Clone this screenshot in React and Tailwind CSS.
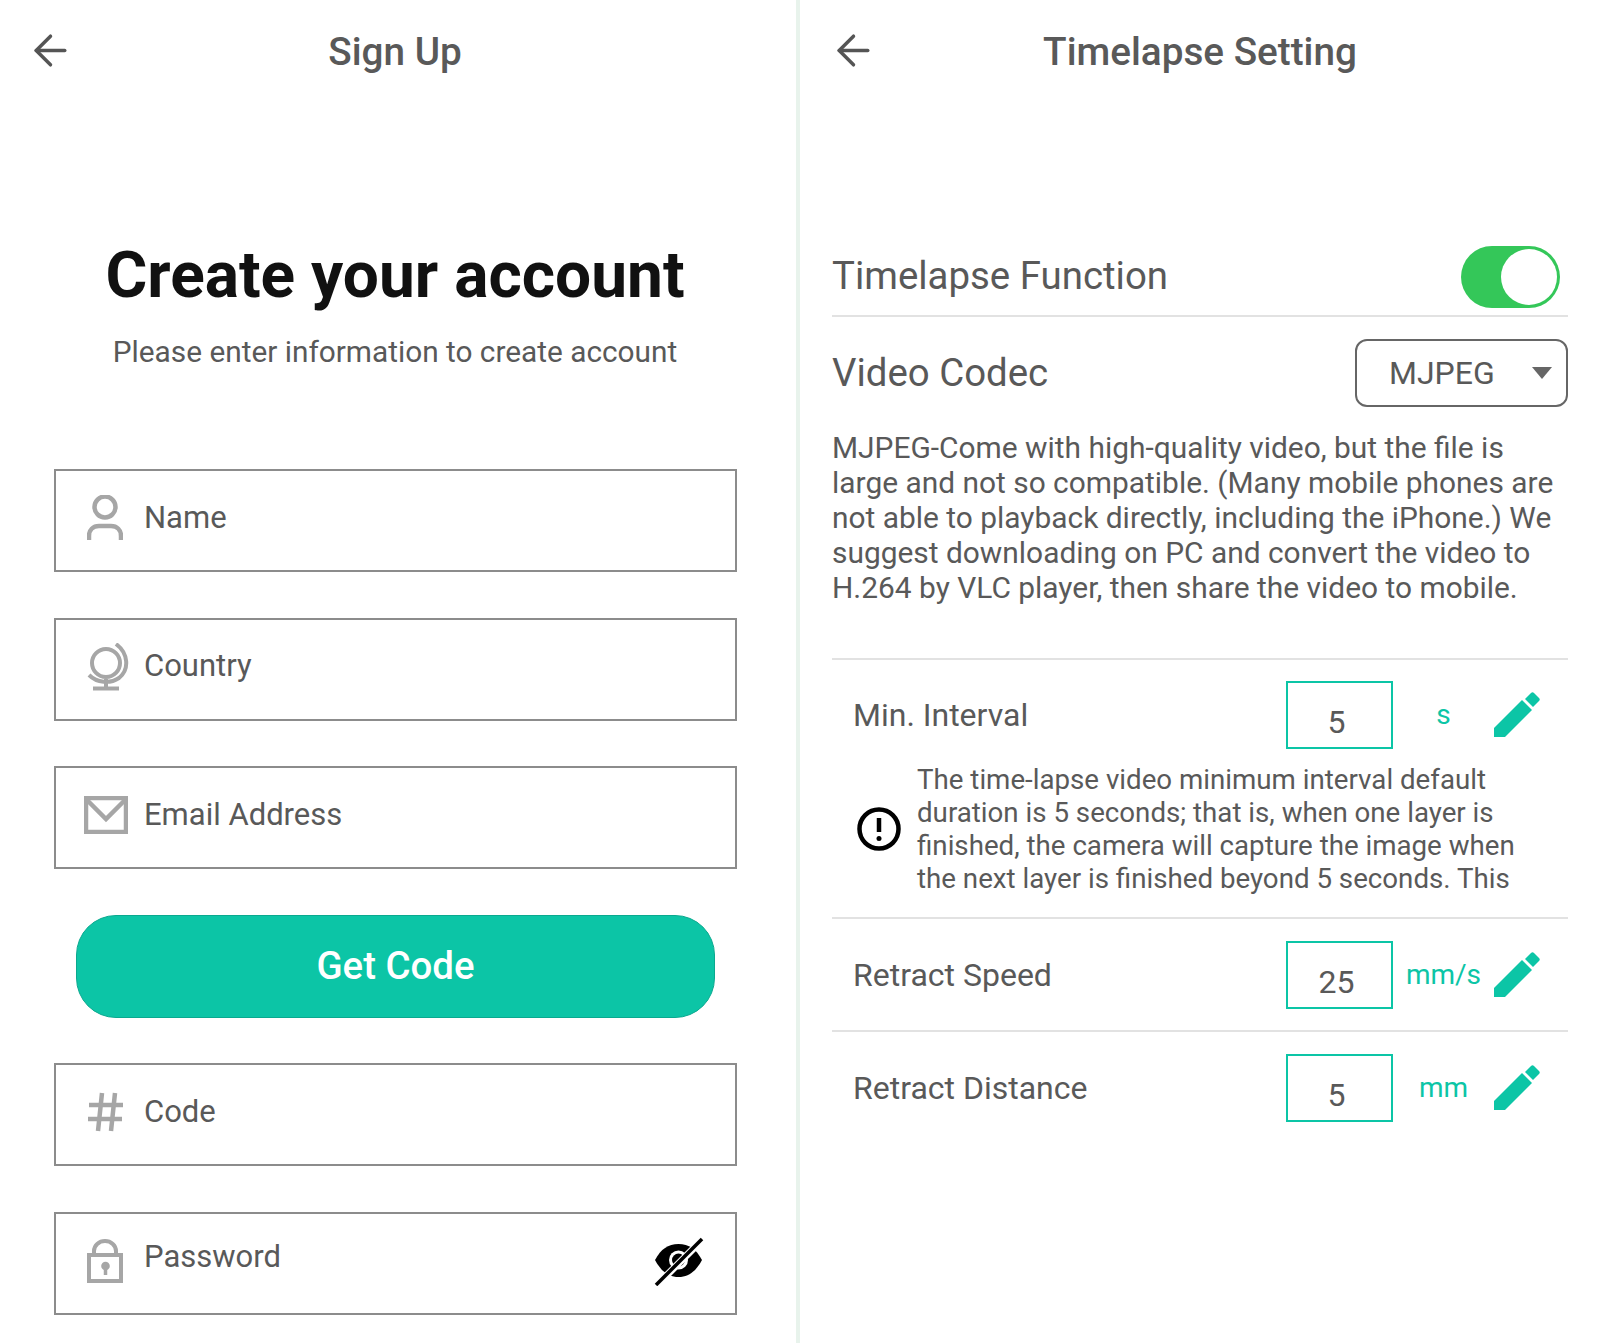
import { ArrowLeft } from 'lucide-react';

const UserIcon = () => (
  <svg width="36" height="46" viewBox="0 0 36 46" fill="none" stroke="#a6a6a6" strokeWidth="4.5">
    <circle cx="18" cy="12" r="10.500" />
    <path d="M2 45v-4c0-6 4-10 10-10h12c6 0 10 4 10 10v4" />
  </svg>
);

const GlobeIcon = () => (
  <svg width="42" height="48" viewBox="0 0 42 48" fill="none" stroke="#a6a6a6" strokeWidth="4" className="ml-[5px]">
    <circle cx="19" cy="20" r="14" />
    <path d="M29 1c12 9 14 25 3 34-9 6-22 5-30-3" />
    <path d="M19 36v8" />
    <path d="M6 45.500h26" strokeWidth="4" />
  </svg>
);

const MailIcon = () => (
  <svg width="44" height="38" viewBox="0 0 44 38" fill="none" stroke="#a6a6a6" strokeWidth="4.5" className="ml-[1px]">
    <path d="M2 2h40v34H2z" />
    <path d="M2 3l20 20L42 3" />
  </svg>
);

const HashIcon = () => (
  <svg width="38" height="40" viewBox="0 0 38 40" fill="none" stroke="#a6a6a6" strokeWidth="4.5" className="ml-[1px]">
    <path d="M15 1l-4 38M28 1l-4 38M2 13h34M1 27h34" />
  </svg>
);

const LockIcon = () => (
  <svg width="36" height="44" viewBox="0 0 36 44" fill="none" stroke="#a6a6a6" strokeWidth="4">
    <path d="M2 16h32v26H2z" />
    <path d="M7 16v-4a11 10 0 0 1 22 0v4" />
    <path d="M18.500 27v9" strokeWidth="3.500" />
    <circle cx="18.500" cy="27" r="4.300" fill="#a6a6a6" stroke="none" />
  </svg>
);

const EyeOffIcon = () => (
  <svg width="50" height="50" viewBox="0 0 50 50">
    <path d="M1 24C7 13 14 8 24.500 8S42 13 48 24c-6 11-13 17-23.500 17S7 35 1 24z" fill="#000" />
    <circle cx="24.500" cy="24" r="9.500" fill="#fff" />
    <circle cx="24.500" cy="24" r="6.500" fill="#000" />
    <path d="M4 48L48 4" stroke="#fff" strokeWidth="7" />
    <path d="M2 49L48 3" stroke="#000" strokeWidth="3.500" />
  </svg>
);

const PencilIcon = () => (
  <svg width="46" height="46" viewBox="0 0 46 46" fill="#0cc5a6">
    <path d="M0 36L28 8l10 10-27 27H0z" />
    <path d="M31 7l6-6c1-1 2-1 3 0l5 5c1 1 1 2 0 3l-6 6z" />
  </svg>
);

const AlertIcon = () => (
  <svg width="44" height="44" viewBox="0 0 44 44" fill="none" stroke="#000" strokeWidth="4.500">
    <circle cx="22" cy="22" r="19.500" />
    <path d="M22 11v14" />
    <circle cx="22" cy="31.500" r="2.500" fill="#000" stroke="none" />
  </svg>
);

const fields = [
  { label: 'Name', icon: <UserIcon /> },
  { label: 'Country', icon: <GlobeIcon /> },
  { label: 'Email Address', icon: <MailIcon /> },
];

const Field = ({ icon, label, labelClass = '', children }) => (
  <div className="flex h-[103px] items-center border-2 border-[#8c8c8c] bg-white pb-[5px]">
    <div className="flex w-[88px] shrink-0 justify-center pl-[10px]">{icon}</div>
    <span className={`flex-1 text-[31px] text-[#595959] ${labelClass}`}>{label}</span>
    {children}
  </div>
);

const Header = ({ title, arrowClass, className = '' }) => (
  <div className={`relative flex h-[104px] items-center justify-center ${className}`}>
    <ArrowLeft className={`absolute top-[26px] text-[#555555] ${arrowClass}`} size={49} strokeWidth={1.7} />
    <h1 className="text-[38.7px] font-medium text-[#595959]">{title}</h1>
  </div>
);

const Setting = ({ label, value, unit }) => (
  <div className="flex h-[113px] items-center border-t-2 border-[#e2e2e2] pl-[21px]">
    <span className="flex-1 text-[32px] text-[#595959]">{label}</span>
    <div className="flex h-[68px] w-[107px] items-center justify-center border-2 border-[#0cc5a6] pr-[6px] pt-[14px] text-[32px] text-[#595959]">{value}</div>
    <span className="w-[101px] text-center text-[28px] text-[#0cc5a6]">{unit}</span>
    <div className="mr-[28px]"><PencilIcon /></div>
  </div>
);

export default function App() {
  return (
    <div className="flex min-h-[1343px] overflow-hidden bg-white font-['Roboto',sans-serif]">
      <div className="box-content w-[796px] shrink-0 border-r-4 border-[#e8f3ec]">
        <Header title="Sign Up" arrowClass="left-[26px]" className="pr-[6px]" />
        <div className="mt-[136px] pr-[6px] text-center">
          <h2 className="text-[64px] leading-[72px] font-bold text-[#111111]">Create your account</h2>
          <p className="mt-[20px] text-[29.8px] leading-[40px] text-[#595959]">Please enter information to create account</p>
        </div>
        <div className="mx-[54px] mt-[97px] flex w-[683px] flex-col gap-[45.5px]">
          {fields.map(f => (
            <Field key={f.label} icon={f.icon} label={f.label} />
          ))}
          <button className="mx-[22px] h-[103px] rounded-[40px] border border-[#0aa98f] bg-[#0cc5a6] text-[38.4px] font-medium text-white">Get Code</button>
          <Field icon={<HashIcon />} label="Code" />
          <Field icon={<LockIcon />} label="Password" labelClass="pb-[6px]">
            <div className="mr-[31px]"><EyeOffIcon /></div>
          </Field>
        </div>
      </div>

      <div className="flex-1 px-[32px]">
        <Header title="Timelapse Setting" arrowClass="-left-[3px]" />
        <div className="mt-[133px] flex h-[80px] items-center justify-between border-b-2 border-[#e2e2e2]">
          <span className="text-[38.4px] text-[#595959]">Timelapse Function</span>
          <div className="relative mr-[8px] mt-[1px] h-[62px] w-[99px] rounded-full bg-[#34c759]">
            <div className="absolute right-[3px] top-[3px] h-[56px] w-[56px] rounded-full bg-white" />
          </div>
        </div>
        <div className="flex h-[112px] items-center justify-between">
          <span className="text-[38.4px] text-[#595959]">Video Codec</span>
          <div className="flex h-[68px] w-[213px] items-center justify-between rounded-[12px] border-2 border-[#666666] pl-[32px] pr-[14px] text-[32px] text-[#595959]">
            MJPEG
            <svg width="20" height="12" viewBox="0 0 20 12"><path d="M0 0h20L10 12z" fill="#666666" /></svg>
          </div>
        </div>
        <p className="mt-[1px] text-[29.9px] leading-[35px] text-[#595959]">
          MJPEG-Come with high-quality video, but the file is large and not so compatible. (Many mobile phones are not able to playback directly, including the iPhone.) We suggest downloading on PC and convert the video to H.264 by VLC player, then share the video to mobile.
        </p>
        <div className="mt-[53px]">
          <div className="border-t-2 border-[#e2e2e2] pl-[21px] pt-[21px]">
            <div className="flex items-center">
              <span className="flex-1 text-[32px] text-[#595959]">Min. Interval</span>
              <div className="flex h-[68px] w-[107px] items-center justify-center border-2 border-[#0cc5a6] pr-[6px] pt-[14px] text-[32px] text-[#595959]">5</div>
              <span className="w-[101px] text-center text-[28px] text-[#0cc5a6]">s</span>
              <div className="mr-[28px]"><PencilIcon /></div>
            </div>
            <div className="ml-[4px] mt-[14px] flex items-center gap-[16px] pb-[22px] pr-[30px]">
              <AlertIcon />
              <p className="flex-1 text-[27.7px] leading-[33px] text-[#595959]">
                The time-lapse video minimum interval default duration is 5 seconds; that is, when one layer is finished, the camera will capture the image when the next layer is finished beyond 5 seconds. This
              </p>
            </div>
          </div>
          <Setting label="Retract Speed" value="25" unit="mm/s" />
          <Setting label="Retract Distance" value="5" unit="mm" />
        </div>
      </div>
    </div>
  );
}
